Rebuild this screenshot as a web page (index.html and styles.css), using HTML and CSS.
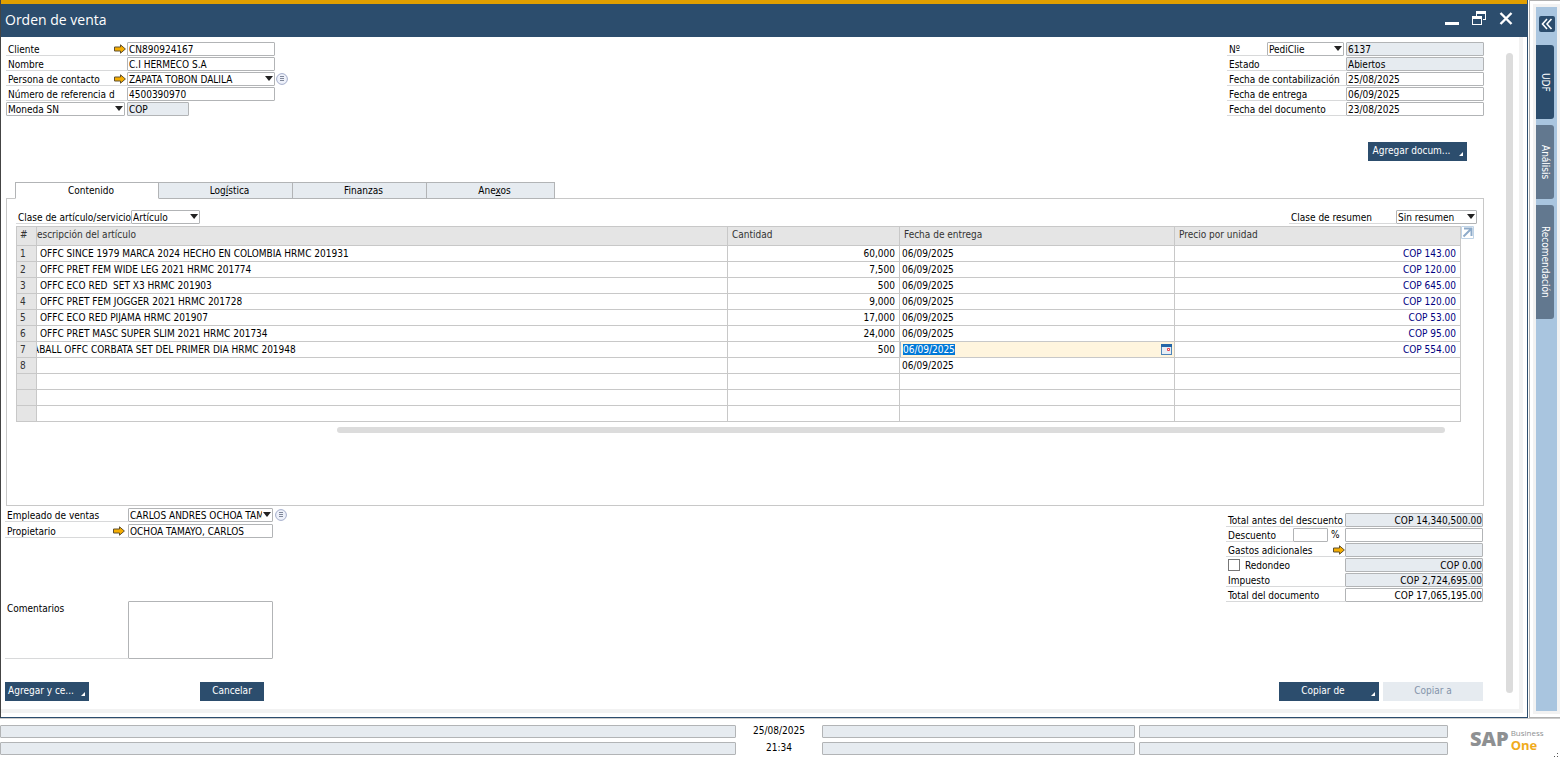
FILE: index.html
```
<!DOCTYPE html>
<html lang="es">
<head>
<meta charset="utf-8">
<title>Orden de venta</title>
<link rel="stylesheet" href="styles.css">
</head>
<body>
<svg class="defs" aria-hidden="true">
  <symbol id="arrow" viewBox="0 0 12 10"><path d="M.5 3h6V.8L11.4 5 6.500 9.200V7h-6z" fill="#f5ad00" stroke="#5f5030"/></symbol>
  <symbol id="list" viewBox="0 0 12 12"><circle cx="6" cy="6" r="5.400" fill="#eef1fa" stroke="#a3adca"/><path d="M4 3.500h4M4 5.500h4M4 7.500h4" stroke="#7f8799"/></symbol>
</svg>
<div class="app">
  <div class="workspace">
    <main class="window">
      <header class="titlebar">
        <h1>Orden de venta</h1>
        <div class="controls">
          <button type="button" aria-label="Minimizar"><svg width="14" height="16" viewBox="0 0 14 16"><path d="M0 12h14v3H0z" fill="#fff"/></svg></button>
          <button type="button" aria-label="Restaurar"><svg width="14" height="16" viewBox="0 0 14 16"><path d="M4 1h10v9h-3V9h2V4H5v2H4zM0 6h10v9H0zm1 3v5h8V9z" fill="#fff" fill-rule="evenodd"/></svg></button>
          <button type="button" aria-label="Cerrar"><svg width="14" height="16" viewBox="0 0 14 16"><path d="M1.500 3l11 11M12.500 3l-11 11" stroke="#fff" stroke-width="2.400"/></svg></button>
        </div>
      </header>
      <div class="frame">
        <form class="form">
          <section class="split">
            <div class="fields left">
              <div class="row"><label class="cap" for="cliente">Cliente</label><svg class="link"><use href="#arrow"/></svg><input id="cliente" class="box" value="CN890924167"></div>
              <div class="row"><label class="cap" for="nombre">Nombre</label><input id="nombre" class="box" value="C.I HERMECO S.A"></div>
              <div class="row"><label class="cap" for="contacto">Persona de contacto</label><svg class="link"><use href="#arrow"/></svg><span class="pick box-w"><select id="contacto"><option>ZAPATA TOBON DALILA</option></select></span><button type="button" class="more" aria-label="Lista de contactos"><svg><use href="#list"/></svg></button></div>
              <div class="row"><label class="cap" for="ref">Número de referencia d</label><input id="ref" class="box" value="4500390970"></div>
              <div class="row"><span class="pick currency"><select aria-label="Moneda"><option>Moneda SN</option></select></span><input class="box short" aria-label="Código de moneda" value="COP" readonly></div>
            </div>
            <div class="fields right">
              <div class="row"><label class="cap" for="num">Nº</label><span class="pick series"><select aria-label="Serie"><option>PediClie</option></select></span><input id="num" class="box" value="6137" readonly></div>
              <div class="row"><label class="cap" for="estado">Estado</label><input id="estado" class="box" value="Abiertos" readonly></div>
              <div class="row"><label class="cap" for="fcont">Fecha de contabilización</label><input id="fcont" class="box" value="25/08/2025"></div>
              <div class="row"><label class="cap" for="fent">Fecha de entrega</label><input id="fent" class="box" value="06/09/2025"></div>
              <div class="row"><label class="cap" for="fdoc">Fecha del documento</label><input id="fdoc" class="box" value="23/08/2025"></div>
            </div>
          </section>
          <div class="attach"><button type="button" class="btn menu">Agregar docum...</button></div>

          <nav class="tabs">
            <button type="button" class="tab active">Contenido</button>
            <button type="button" class="tab">Log<u>í</u>stica</button>
            <button type="button" class="tab">Finanzas</button>
            <button type="button" class="tab last">Ane<u>x</u>os</button>
          </nav>
          <section class="panel">
            <div class="filters">
              <div class="row"><label class="cap" for="clase">Clase de artículo/servicio</label><span class="pick kind"><select id="clase"><option>Artículo</option></select></span></div>
              <div class="row summary"><label class="cap" for="resumen">Clase de resumen</label><span class="pick"><select id="resumen"><option>Sin resumen</option></select></span></div>
            </div>
            <div class="grid">
              <table>
                <colgroup><col class="c-num"><col><col class="c-qty"><col class="c-date"><col class="c-price"></colgroup>
                <thead><tr><th>#</th><th class="desc"><span class="cut">Descripción del artículo</span></th><th>Cantidad</th><th>Fecha de entrega</th><th>Precio por unidad</th></tr></thead>
                <tbody>
                  <tr><th>1</th><td>OFFC SINCE 1979 MARCA 2024 HECHO EN COLOMBIA HRMC 201931</td><td>60,000</td><td>06/09/2025</td><td>COP 143.00</td></tr>
                  <tr><th>2</th><td>OFFC PRET FEM WIDE LEG 2021 HRMC 201774</td><td>7,500</td><td>06/09/2025</td><td>COP 120.00</td></tr>
                  <tr><th>3</th><td>OFFC ECO RED&nbsp; SET X3 HRMC 201903</td><td>500</td><td>06/09/2025</td><td>COP 645.00</td></tr>
                  <tr><th>4</th><td>OFFC PRET FEM JOGGER 2021 HRMC 201728</td><td>9,000</td><td>06/09/2025</td><td>COP 120.00</td></tr>
                  <tr><th>5</th><td>OFFC ECO RED PIJAMA HRMC 201907</td><td>17,000</td><td>06/09/2025</td><td>COP 53.00</td></tr>
                  <tr><th>6</th><td>OFFC PRET MASC SUPER SLIM 2021 HRMC 201734</td><td>24,000</td><td>06/09/2025</td><td>COP 95.00</td></tr>
                  <tr><th>7</th><td class="desc"><span class="cut">ABALL OFFC CORBATA SET DEL PRIMER DIA HRMC 201948</span></td><td>500</td><td class="editing"><div class="editor"><input id="cell" aria-label="Fecha de entrega" value="06/09/2025"><button type="button" aria-label="Calendario"><svg width="11" height="11" viewBox="0 0 11 11"><path d="M0 0h11v11H0z" fill="#4d84b8"/><path d="M1 3h9v7H1z" fill="#e6edf5"/><path d="M0 0h11v3H0z" fill="#2466a8"/><path d="M6.500 4.500h2v2h-2z" fill="#fff" stroke="#e8414d"/></svg></button></div></td><td>COP 554.00</td></tr>
                  <tr><th>8</th><td></td><td></td><td>06/09/2025</td><td></td></tr>
                  <tr><th></th><td></td><td></td><td></td><td></td></tr>
                  <tr><th></th><td></td><td></td><td></td><td></td></tr>
                  <tr><th></th><td></td><td></td><td></td><td></td></tr>
                </tbody>
              </table>
              <button type="button" class="expand" aria-label="Expandir tabla"><svg width="13" height="13" viewBox="0 0 13 13"><path d="M.5.5h12v12H.5z" fill="#fff" stroke="#bfd3e6"/><path d="M2.500 10.500l7-7M3 2.500h7.500V10" fill="none" stroke="#8eabca" stroke-width="2"/></svg></button>
            </div>
            <div class="hscroll"></div>
          </section>

          <section class="split bottom">
            <div class="fields left">
              <div class="row"><label class="cap" for="emp">Empleado de ventas</label><span class="pick box-w"><select id="emp"><option>CARLOS ANDRES OCHOA TAMAYO</option></select></span><button type="button" class="more" aria-label="Lista de empleados"><svg><use href="#list"/></svg></button></div>
              <div class="row"><label class="cap" for="prop">Propietario</label><svg class="link"><use href="#arrow"/></svg><input id="prop" class="box" value="OCHOA TAMAYO, CARLOS"></div>
              <div class="row comments"><label class="cap" for="com">Comentarios</label><textarea id="com" class="box"></textarea></div>
            </div>
            <div class="fields right totals">
              <div class="row"><label class="cap" for="t1">Total antes del descuento</label><input id="t1" class="box" value="COP 14,340,500.00" readonly></div>
              <div class="row"><label class="cap" for="t2">Descuento</label><input id="t2" class="box pct"><span class="unit">%</span><input class="box" aria-label="Importe de descuento"></div>
              <div class="row"><label class="cap" for="t3">Gastos adicionales</label><svg class="link"><use href="#arrow"/></svg><input id="t3" class="box" readonly></div>
              <div class="row"><label class="cap plain"><input type="checkbox">Redondeo</label><input class="box" aria-label="Importe de redondeo" value="COP 0.00" readonly></div>
              <div class="row"><label class="cap" for="t5">Impuesto</label><input id="t5" class="box" value="COP 2,724,695.00" readonly></div>
              <div class="row"><label class="cap" for="t6">Total del documento</label><input id="t6" class="box" value="COP 17,065,195.00"></div>
            </div>
          </section>
          <footer class="actions">
            <button type="button" class="btn menu add">Agregar y ce...</button>
            <button type="button" class="btn cancel">Cancelar</button>
            <button type="button" class="btn menu copy">Copiar de</button>
            <button type="button" class="btn copy" disabled>Copiar a</button>
          </footer>
        </form>
        <div class="vscroll"></div>
      </div>
    </main>
    <aside class="side">
      <div class="rail">
        <button type="button" class="collapse" aria-label="Mostrar panel"><svg width="12" height="12" viewBox="0 0 12 12"><path d="M6 1L1.500 6 6 11M10.500 1L6 6l4.500 5" fill="none" stroke="#fff" stroke-width="1.600"/></svg></button>
        <button type="button" class="vtab on">UDF</button>
        <button type="button" class="vtab">Análisis</button>
        <button type="button" class="vtab tall">Recomendación</button>
      </div>
    </aside>
  </div>
  <footer class="status">
    <div class="cells wide"><i></i><i></i></div>
    <div class="clock"><span>25/08/2025</span><span>21:34</span></div>
    <div class="cells mid"><i></i><i></i></div>
    <div class="cells end"><i></i><i></i></div>
    <div class="brand"><b>SAP</b><span class="brand-sub"><span>Business</span><strong>One</strong></span></div>
    <svg class="grip" width="4" height="4" viewBox="0 0 4 4"><path d="M3 0h1v1H3zM0 3h1v1H0zM3 3h1v1H3z" fill="#555"/></svg>
  </footer>
</div>
<script src="script.js"></script>
</body>
</html>
```
FILE: styles.css
```
:root {
  --navy: #2c4d6d;
  --line: #b2b4b6;
  --grid: #c8c8c8;
  --read: #e6ebf0;
  --ui: "DejaVu Sans Condensed", "DejaVu Sans", sans-serif;
}
* { box-sizing: border-box; }
body { margin: 0; background: #fff; color: #000; font: 10px/12px var(--ui); }
button, input, select, textarea { font: inherit; color: inherit; margin: 0; border-radius: 0; }
button { padding: 0; border: 0; background: none; white-space: nowrap; }
.defs { display: none; }

.app { min-height: 100vh; display: flex; flex-direction: column; }
.workspace { flex: 1; display: flex; }
.window {
  flex: 1; min-width: 0; display: flex; flex-direction: column;
  border-left: 1px solid #444; border-right: 1px solid var(--navy); border-bottom: 1px solid var(--navy);
}
.titlebar {
  height: 37px; padding: 0 14px 2px 4px; display: flex; align-items: center; justify-content: space-between;
  background: var(--navy); border-top: 4px solid #e19f00; color: #fff;
}
.titlebar h1 { margin: 0; font: 14px/20px "Open Sans", "Noto Sans", sans-serif; }
.controls { display: flex; gap: 13px; padding-bottom: 3px; }
.controls svg { display: block; }
.frame {
  flex: 1; display: flex; gap: 22px; margin: 0 4px 4px 0; padding: 0 6px 0 4px;
  border-right: 4px solid #f2f2f2; border-bottom: 4px solid #f2f2f2;
}
.form { flex: 1; min-width: 0; padding: 5px 0 8px; }
.vscroll { width: 7px; margin: 16px 0; border-radius: 4px; background: #dcdcdc; }

/* Label and field rows */
.split { display: flex; justify-content: space-between; }
.fields { display: flex; flex-direction: column; gap: 1px; }
.row { display: flex; position: relative; height: 14px; }
.cap { flex: 1; padding: 2px 0 0 2px; border-bottom: 1px solid #d8d9da; line-height: 11px; white-space: nowrap; overflow: hidden; }
.cap.plain { border: 0; display: flex; gap: 5px; padding-top: 1px; line-height: 13px; }
.left { padding-left: 1px; }
.left .row { width: 269px; }
.right .row { width: 257px; }
.right .box { width: 138px; }
.box { width: 148px; padding: 1px 1px 0; border: 1px solid var(--line); border-radius: 1px; background: #fff; outline: 0; }
.box:read-only { background: var(--read); }
.box-w { width: 148px; }
.box.short { width: 62px; margin: 0 86px 0 2px; }
.currency { flex: 1; }
.link { position: absolute; left: 108px; top: 2px; width: 12px; height: 10px; }
.more { position: absolute; left: 270px; top: 1px; width: 12px; height: 12px; }
.more svg { display: block; width: 12px; height: 12px; }
.pick { display: block; position: relative; }
.pick::after {
  content: ""; position: absolute; right: 2px; top: 4px; width: 8px; height: 5px;
  background: #222; clip-path: polygon(0 0, 100% 0, 50% 100%);
}
select {
  display: block; width: 100%; height: 14px; appearance: none; padding: 1px 10px 0 1px; line-height: 12px;
  border: 1px solid var(--line); border-radius: 1px; background: #fff; text-overflow: clip; outline: 0;
}
.series { width: 77px; margin-right: 2px; }

.btn { position: relative; height: 19px; padding-bottom: 1px; background: var(--navy); color: #fff; text-align: center; }
.btn.menu { padding-right: 12px; }
.btn.menu::after {
  content: ""; position: absolute; right: 4px; bottom: 5px; width: 4px; height: 4px;
  background: #fff; clip-path: polygon(100% 0, 100% 100%, 0 100%);
}
.btn:disabled { background: var(--read); color: #8494aa; }
.attach { display: flex; justify-content: flex-end; margin: 26px 17px 21px 0; }
.attach .btn { width: 99px; }

.tabs { display: flex; margin: 0 0 -1px 10px; position: relative; }
.tab { width: 134px; height: 17px; padding-left: 8px; border: 1px solid var(--line); border-left: 0; background: var(--read); }
.tab.active { width: 144px; border-left: 1px solid var(--line); border-bottom-color: #fff; background: #fff; }
.tab.last { width: 128px; }
.panel { height: 308px; margin-left: 1px; padding: 11px 6px 0 9px; border: 1px solid var(--grid); }
.filters { display: flex; justify-content: space-between; margin-bottom: 2px; }
.filters .kind { width: 69px; }
.summary { width: 188px; }
.summary .pick { width: 81px; }
.grid { display: flex; padding-right: 3px; }

table { flex: 1; min-width: 0; table-layout: fixed; border-collapse: collapse; }
.c-num { width: 20px; }
.c-qty { width: 172px; }
.c-date { width: 275px; }
.c-price { width: 286px; }
th, td { height: 16px; padding: 0 3px 0 2px; border: 1px solid var(--grid); white-space: nowrap; overflow: hidden; text-align: left; font-weight: 400; }
td { padding-top: 1px; }
th { padding: 0 4px; background: #e5e5e5; color: #333; }
thead th { height: 19px; padding-bottom: 3px; }
th:first-child { padding-left: 3px; }
td:nth-child(2) { padding-left: 3px; }
td:nth-child(3), td:last-child { padding-right: 4px; text-align: right; }
td:last-child { color: #000080; }
.desc, td.desc { padding-left: 0; }
.cut { display: block; overflow: hidden; text-indent: -7px; }
td .cut { text-indent: -4px; }
td.editing { padding: 0; }
.editor { display: flex; align-items: center; height: 15px; padding: 0 2px 0 1px; background: #fff5de; border-left: 1px solid #9cbcdc; }
.editor input { flex: 1; min-width: 0; height: 13px; padding: 0 1px; border: 0; background: none; outline: 0; }
.editor input::selection { background: #0078d7; color: #fff; }
.editor svg, .expand svg { display: block; }
.expand { align-self: flex-start; }
.hscroll { height: 6px; margin: 5px 32px 0 321px; border-radius: 3px; background: #dcdcdc; }

.bottom { padding-top: 2px; }
.bottom .left { gap: 2px; padding-left: 0; }
.bottom .left .row { width: 268px; }
.bottom .left .box, .bottom .box-w { width: 145px; }
.bottom .left .row.comments { height: 58px; margin-top: 61px; }
textarea { resize: none; }
.totals { padding: 5px 1px 0 0; }
.totals .box { text-align: right; padding-right: 0; }
.totals .box.pct { width: 35px; }
.totals .link { left: 107px; }
.unit { width: 17px; padding: 1px 3px; }
input[type="checkbox"] { appearance: none; width: 12px; height: 12px; border: 1px solid #777; background: #fff; }

.actions { display: flex; margin-top: 23px; padding-right: 1px; }
.add { width: 84px; margin-right: 111px; }
.cancel { width: 64px; margin-right: auto; }
.copy { width: 100px; margin-left: 4px; }

.side { width: 31px; margin-left: 1px; padding: 3px 0 3px 3px; border: 1px solid #b0b0b0; border-right: 0; }
.rail {
  height: 100%; display: flex; flex-direction: column; align-items: flex-start; gap: 6px;
  border: 3px solid #f2f2f2; background: #a9c5df; padding-top: 9px;
}
.collapse { width: 16px; height: 16px; margin: 0 0 7px 3px; border-radius: 2px; background: var(--navy); }
.collapse svg { display: block; margin: auto; }
.vtab { width: 18px; height: 74px; border-radius: 0 3px 3px 0; background: #62788f; color: #fff; writing-mode: vertical-rl; }
.vtab.on { background: var(--navy); }
.vtab.tall { height: 114px; }

.status { position: relative; display: flex; border-top: 1px solid #ccc; border-bottom: 1px solid #eee; padding: 6px 12px 2px 0; }
.cells { display: grid; gap: 4px; }
.cells i { height: 13px; border: 1px solid var(--line); border-radius: 1px; background: var(--read); }
.wide { flex: 1; }
.mid { width: 313px; margin-right: 4px; }
.end { width: 309px; margin-right: 22px; }
.clock { width: 86px; display: grid; gap: 4px; text-align: center; }
.brand { display: flex; align-items: center; gap: 2px; width: 78px; height: 28px; font-family: "Open Sans", "Noto Sans", sans-serif; }
.brand b { font-size: 20px; font-weight: 800; color: #8e9092; }
.brand-sub { display: flex; flex-direction: column; color: #8e9092; font-size: 8px; line-height: 12px; }
.brand-sub strong { color: #f0ab1c; font-size: 13px; line-height: 12px; }
.grip { position: absolute; right: 2px; bottom: 0; }
```
FILE: script.js
```
const cell = document.getElementById("cell");
cell.focus();
cell.select();
```
